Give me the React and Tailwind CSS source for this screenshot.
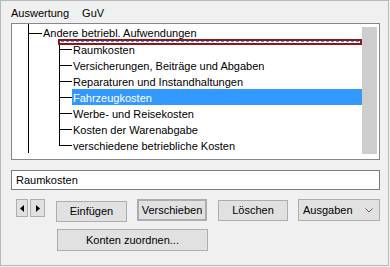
import React from "react";

const children = [
  "Raumkosten",
  "Versicherungen, Beiträge und Abgaben",
  "Reparaturen und Instandhaltungen",
  "Fahrzeugkosten",
  "Werbe- und Reisekosten",
  "Kosten der Warenabgabe",
  "verschiedene betriebliche Kosten",
];

const TreeLines = () => (
  <svg className="absolute inset-0 pointer-events-none" width="350" height="133">
    <g stroke="#000" strokeWidth="1" shapeRendering="crispEdges">
      <line x1="16.5" y1="0" x2="16.5" y2="129" />
      <line x1="16" y1="9.5" x2="30" y2="9.5" />
      <line x1="47.5" y1="17" x2="47.5" y2="122" />
      {children.map((c, i) => (
        <line key={c} x1="47" y1={25.5 + 16 * i} x2="60" y2={25.5 + 16 * i} />
      ))}
    </g>
  </svg>
);

const Button = ({ children, className = "" }) => (
  <button
    className={
      "h-[21px] bg-[#e1e1e1] border border-[#adadad] text-[11px] text-black flex items-center justify-center " +
      className
    }
  >
    {children}
  </button>
);

export default function App() {
  return (
    <div
      className="w-[390px] h-[267px] bg-[#f0f0f0] text-black text-[11px]"
      style={{ fontFamily: '"Liberation Sans", Arial, sans-serif' }}
    >
      <div className="w-[389px] h-[266px] border border-[#b9b9b9] flex flex-col">
        {/* menu */}
        <div className="h-[22px] pl-[10px] pt-[6px] flex leading-[13px]">
          <span>Auswertung</span>
          <span className="ml-[13px]">GuV</span>
        </div>

        {/* tree */}
        <div className="ml-[10px] w-[369px] h-[137px] border border-[#828790] bg-white flex">
          <div className="relative flex-1 pt-[1px]">
            <TreeLines />
            <div className="h-[16px] pl-[31px] flex items-center leading-none">
              Andere betriebl. Aufwendungen
            </div>
            {children.map((c) => (
              <div key={c} className="h-[16px] pl-[60px] flex">
                <div
                  className={
                    "flex-1 flex items-center pl-[1px] pt-[2px] leading-none " +
                    (c === "Fahrzeugkosten" ? "bg-[#3399ff] text-white" : "")
                  }
                >
                  {c}
                </div>
              </div>
            ))}
            {/* drop marker */}
            <div className="absolute left-[46px] right-0 top-[15px] h-[6px] border-2 border-[#931515]">
              <div className="mx-[1px] border-t border-dashed border-[#3399ff]" />
            </div>
          </div>
          <div className="w-[15px] mt-[3px] mb-[5px] mr-[2px] bg-[#cdcdcd]" />
        </div>

        {/* text field */}
        <div className="ml-[10px] mt-[10px] w-[369px] h-[20px] border border-[#7a7a7a] bg-white pl-[4px] flex items-center">
          Raumkosten
        </div>

        {/* buttons */}
        <div className="mt-[9px] ml-[15px] flex items-start h-[23px]">
          <button className="w-[12px] h-[18px] bg-[#e1e1e1] border border-[#adadad] flex items-center justify-center">
            <svg width="4" height="7" viewBox="0 0 4 7">
              <path d="M4 0 L0 3.5 L4 7 Z" fill="#000" />
            </svg>
          </button>
          <button className="ml-[2px] w-[15px] h-[18px] bg-[#e1e1e1] border border-[#adadad] flex items-center justify-center">
            <svg width="4" height="7" viewBox="0 0 4 7">
              <path d="M0 0 L4 3.5 L0 7 Z" fill="#000" />
            </svg>
          </button>
          <Button className="ml-[11px] mt-[2px] w-[71px]">Einfügen</Button>
          <Button className="ml-[10px] w-[70px] h-[22px] border-2 border-[#931515]">
            Verschieben
          </Button>
          <Button className="ml-[11px] mt-[1px] w-[70px]">Löschen</Button>
          <div className="ml-[10px] w-[82px] h-[22px] bg-[#e1e1e1] border border-[#adadad] flex items-center pl-[4px] pr-[6px]">
            <span className="flex-1">Ausgaben</span>
            <svg width="8" height="5" viewBox="0 0 8 5">
              <path d="M0.5 0.5 L4 4 L7.5 0.5" fill="none" stroke="#606060" strokeWidth="1" />
            </svg>
          </div>
        </div>

        <div className="ml-[56px] mt-[7px]">
          <Button className="w-[151px] h-[22px]">Konten zuordnen...</Button>
        </div>
      </div>
    </div>
  );
}
